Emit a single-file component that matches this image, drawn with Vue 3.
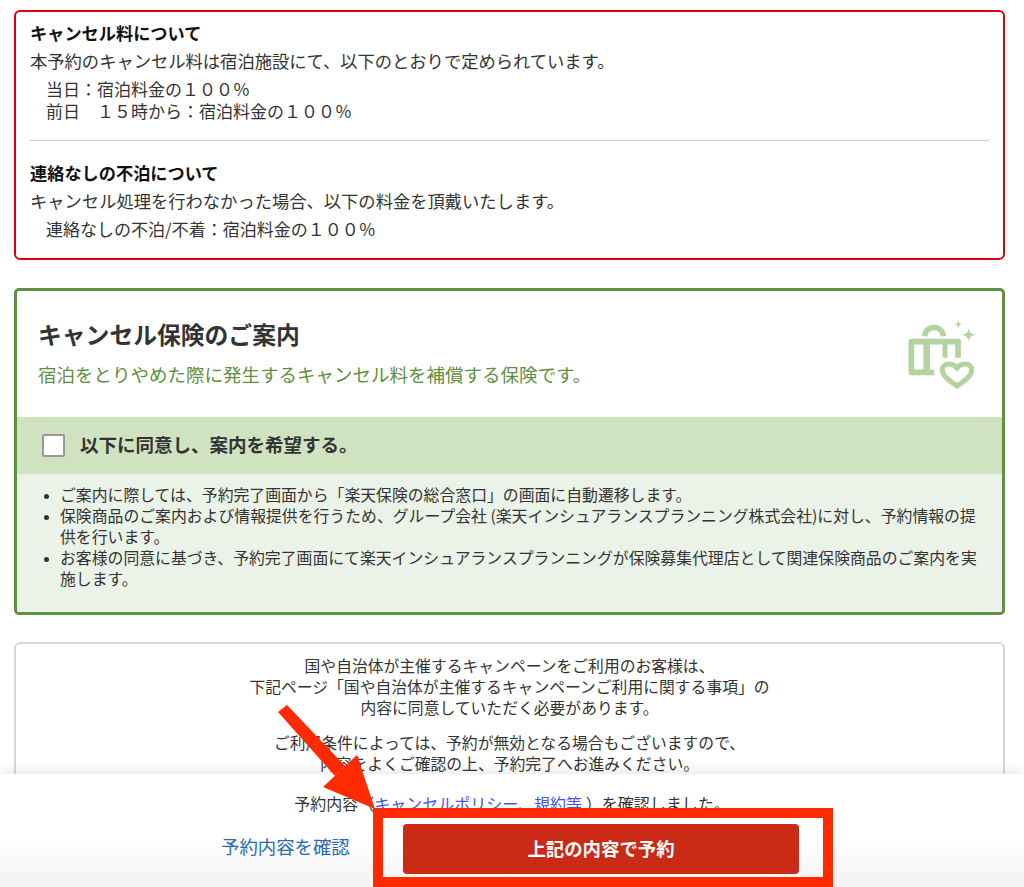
<script setup>
const bullets = [
  'ご案内に際しては、予約完了画面から「楽天保険の総合窓口」の画面に自動遷移します。',
  '保険商品のご案内および情報提供を行うため、グループ会社 (楽天インシュアランスプランニング株式会社)に対し、予約情報の提供を行います。',
  'お客様の同意に基づき、予約完了画面にて楽天インシュアランスプランニングが保険募集代理店として関連保険商品のご案内を実施します。'
]
</script>

<template>
  <div class="page">
    <section class="notice">
      <h3 class="notice-title">キャンセル料について</h3>
      <p class="notice-lead">本予約のキャンセル料は宿泊施設にて、以下のとおりで定められています。</p>
      <p class="notice-item">当日：宿泊料金の１００％</p>
      <p class="notice-item">前日　１５時から：宿泊料金の１００％</p>
      <hr class="rule" />
      <h3 class="notice-title">連絡なしの不泊について</h3>
      <p class="notice-lead">キャンセル処理を行わなかった場合、以下の料金を頂戴いたします。</p>
      <p class="notice-item">連絡なしの不泊/不着：宿泊料金の１００％</p>
    </section>

    <section class="insurance">
      <div class="ins-head">
        <div class="ins-text">
          <h2 class="ins-title">キャンセル保険のご案内</h2>
          <p class="ins-sub">宿泊をとりやめた際に発生するキャンセル料を補償する保険です。</p>
        </div>
        <svg class="ins-icon" viewBox="60 50 249 225" width="83" height="75" fill="none" stroke="#b5d3a0" stroke-width="17">
          <path d="M131 108 C134 72 184 72 187 108" />
          <path d="M160 216 H91 V124 H231 V172" stroke-linejoin="round" />
          <path d="M137 124 V216" stroke-width="20" />
          <path d="M192 124 V172" stroke-width="15" />
          <path d="M228 258 C205 240 184 228 184 208 C184 188 214 184 228 204 C242 184 272 188 272 208 C272 228 251 240 228 258 Z" stroke-width="15" stroke-linejoin="round" fill="#fff" />
          <path d="M232 58 C233 68 236 71 246 72 C236 73 233 76 232 86 C231 76 228 73 218 72 C228 71 231 68 232 58 Z M263 82 C264 95 270 101 286 103 C270 105 264 111 263 125 C262 111 256 105 240 103 C256 101 262 95 263 82 Z" fill="#b5d3a0" stroke="none" />
        </svg>
      </div>
      <label class="ins-agree">
        <span class="check"></span>
        <span class="agree-text">以下に同意し、案内を希望する。</span>
      </label>
      <ul class="ins-list">
        <li v-for="b in bullets" :key="b">{{ b }}</li>
      </ul>
    </section>

    <section class="campaign">
      <p>国や自治体が主催するキャンペーンをご利用のお客様は、<br />下記ページ「国や自治体が主催するキャンペーンご利用に関する事項」の<br />内容に同意していただく必要があります。</p>
      <p>ご利用条件によっては、予約が無効となる場合もございますので、<br />内容をよくご確認の上、予約完了へお進みください。</p>
    </section>

    <footer class="footer">
      <p class="confirm">予約内容（<a class="policy">キャンセルポリシー、規約等</a> ）を確認しました。</p>
      <div class="actions">
        <a class="review">予約内容を確認</a>
        <button class="submit">上記の内容で予約</button>
      </div>
    </footer>

    <div class="mark-box"></div>
    <svg class="mark-arrow" width="1024" height="887" viewBox="0 0 1024 887">
      <polygon points="278,712 287,705 345,766 335,776" fill="#ff2a00" />
      <polygon points="375,809 323,787 357,755" fill="#ff2a00" />
    </svg>
  </div>
</template>

<style>
html, body { margin: 0; background: #fff; }
</style>

<style scoped>
.page {
  position: relative;
  width: 1024px;
  height: 887px;
  overflow: hidden;
  box-sizing: border-box;
  padding: 10px 19px 0 14px;
  background: #fff;
  color: #333;
  font-family: "Noto Sans CJK JP", "Noto Sans", sans-serif;
  text-spacing-trim: space-all;
}
h2, h3, p, ul { margin: 0; padding: 0; }

.notice {
  box-sizing: border-box;
  height: 250px;
  padding: 10px 14px 0;
  border: 2px solid #d9000f;
  border-radius: 6px;
  font-size: 17px;
  line-height: 22px;
}
.notice-title { font-size: 17.2px; line-height: 22px; font-weight: 700; color: #111; }
.notice-lead { margin-top: 6px; margin-bottom: 6px; font-size: 17.3px; }
.notice-item { padding-left: 16px; }
.rule { border: 0; border-top: 1px solid #ccc; margin: 18px 0 21px; }

.insurance {
  box-sizing: border-box;
  height: 327px;
  margin-top: 28px;
  border: 3px solid #5f8f42;
  border-radius: 5px;
  background: #fff;
  overflow: hidden;
}
.ins-head {
  display: flex;
  align-items: center;
  justify-content: space-between;
  height: 126px;
  padding: 0 18px 0 21px;
}
.ins-title { font-size: 23.8px; line-height: 32px; font-weight: 700; color: #333; }
.ins-sub { margin-top: 11px; font-size: 18.5px; line-height: 26px; color: #5f8f42; }
.ins-text { padding-bottom: 4px; }
.ins-agree {
  display: flex;
  align-items: center;
  gap: 15px;
  height: 57px;
  padding-left: 25px;
  background: #cfe3c0;
  font-size: 18.5px;
  font-weight: 700;
}
.agree-text { padding-bottom: 3px; }
.check {
  box-sizing: border-box;
  width: 23px;
  height: 23px;
  border: 2px solid #999;
  border-radius: 2px;
  background: #fff;
}
.ins-list {
  box-sizing: border-box;
  height: 141px;
  padding: 10px 21px 0 43px;
  background: #ebf2e8;
  font-size: 15.85px;
  line-height: 21px;
  color: #333;
}
.ins-list li::marker { font-size: 12px; }

.campaign {
  box-sizing: border-box;
  height: 200px;
  margin-top: 27px;
  padding: 11px 14px 0;
  border: 2px solid #d8d8d8;
  border-radius: 6px;
  text-align: center;
  font-size: 15.8px;
  line-height: 21px;
}
.campaign p + p { margin-top: 14px; }

.footer {
  position: absolute;
  left: 0;
  right: 0;
  bottom: 0;
  height: 113px;
  box-sizing: border-box;
  padding-top: 19px;
  background: linear-gradient(#fff 55%, #f3f3f3);
  box-shadow: 0 -5px 10px rgba(0, 0, 0, 0.07);
  text-align: center;
}
.confirm { font-size: 16px; line-height: 21px; color: #333; }
.policy { color: #4455e8; }
.actions {
  display: flex;
  align-items: flex-start;
  margin-top: 10px;
  padding-left: 221px;
}
.review { width: 182px; padding-top: 10px; text-align: left; font-size: 18.4px; line-height: 24px; color: #2d6ab0; }
.submit {
  width: 396px;
  height: 50px;
  padding: 0 0 3px;
  border: 0;
  border-radius: 4px;
  background: #cb2a17;
  color: #fff;
  font: 700 18.4px/24px "Noto Sans CJK JP", sans-serif;
}

.mark-box {
  position: absolute;
  left: 373px;
  top: 808px;
  width: 460px;
  height: 79px;
  box-sizing: border-box;
  border: 10px solid #ff2a00;
}
.mark-arrow { position: absolute; left: 0; top: 0; pointer-events: none; }
</style>
